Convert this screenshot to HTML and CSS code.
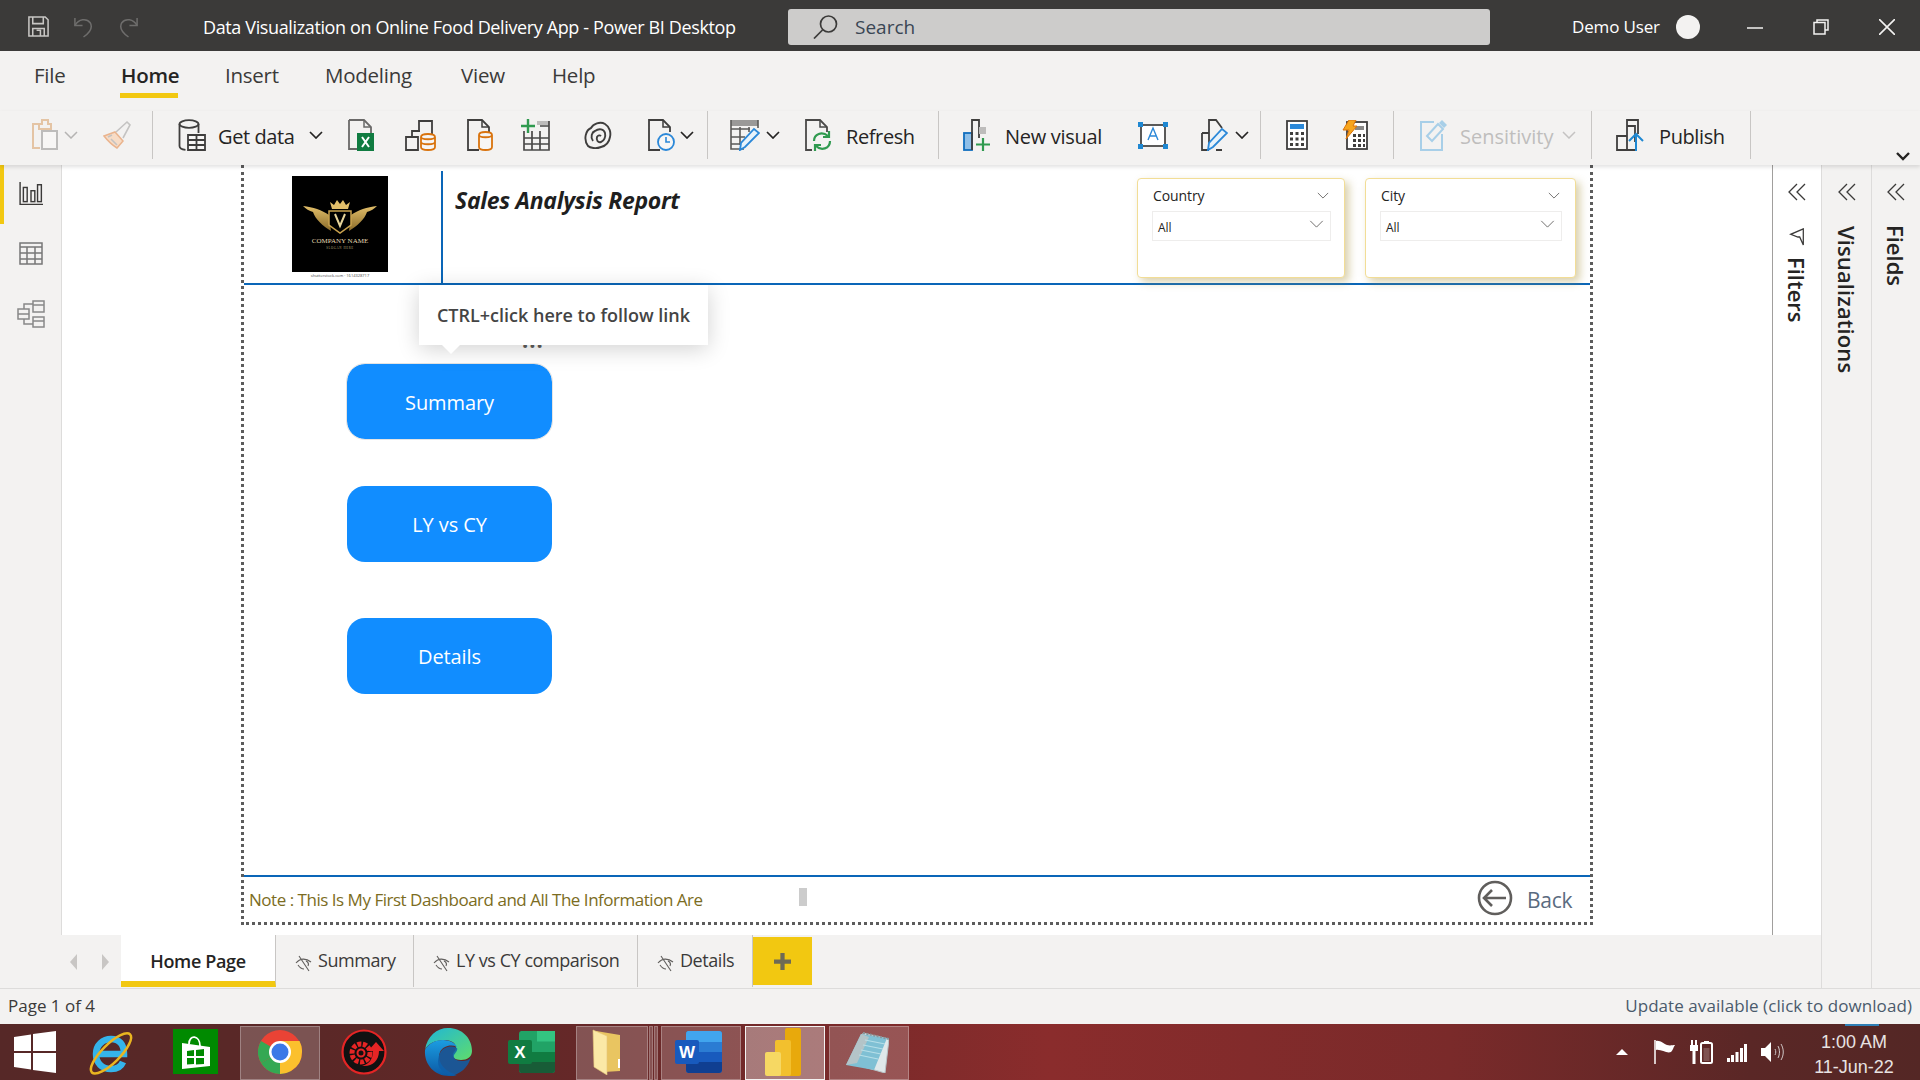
FILE: index.html
```html
<!DOCTYPE html>
<html lang="en">
<head>
    <meta charset="UTF-8">
    <title>Data Visualization on Online Food Delivery App - Power BI Desktop</title>
    <link rel="stylesheet" href="styles.css">
</head>
<body>
    <!-- title bar -->
    <header class="titlebar">
        <svg class="qa qa-save" viewBox="0 0 24 24" fill="none" stroke="#c8c6c4" stroke-width="1.6"><path d="M2 2h17l3 3v17H2z"/><path d="M6 2v7h11V2M6 22v-8h12v8"/><path d="M10 16h4v6"/></svg>
        <svg class="qa qa-undo" viewBox="0 0 22 24" fill="none" stroke="#6e6d6c" stroke-width="1.6"><path d="M2 3v8h8"/><path d="M2 11C6 4 14 3 18 8c3 5 0 10-7 15"/></svg>
        <svg class="qa qa-redo" viewBox="0 0 22 24" fill="none" stroke="#6e6d6c" stroke-width="1.6"><path d="M20 3v8h-8"/><path d="M20 11C16 4 8 3 4 8c-3 5 0 10 7 15"/></svg>
        <div class="doc-title">Data Visualization on Online Food Delivery App - Power BI Desktop</div>
        <div class="searchbox">
            <svg class="search-icon" viewBox="0 0 25 24" fill="none" stroke="#3b3a39" stroke-width="1.7"><circle cx="15.5" cy="9" r="8"/><path d="M9.5 15L1 23.5"/></svg>
            <span>Search</span>
        </div>
        <div class="user">Demo User</div>
        <div class="avatar"></div>
        <svg class="win-btn win-min" viewBox="0 0 16 16" stroke="#f3f2f1" stroke-width="1.5"><path d="M0 8h16"/></svg>
        <svg class="win-btn win-max" viewBox="0 0 16 16" fill="none" stroke="#f3f2f1" stroke-width="1.5"><path d="M4 3V1h11v10h-3"/><rect x="1" y="3.5" width="11" height="11.5"/></svg>
        <svg class="win-btn win-close" viewBox="0 0 16 16" stroke="#f3f2f1" stroke-width="1.6"><path d="M0 0l16 16M16 0L0 16"/></svg>
    </header>

    <!-- ribbon -->
    <nav class="ribbon-tabs">
        <div class="rtab rtab-file">File</div>
        <div class="rtab rtab-home">Home</div>
        <div class="rtab rtab-insert">Insert</div>
        <div class="rtab rtab-model">Modeling</div>
        <div class="rtab rtab-view">View</div>
        <div class="rtab rtab-help">Help</div>
    </nav>
    <div class="toolbar">
        <svg class="tool t-paste" viewBox="0 0 28 32" fill="none"><path d="M8 5H2v24h7" stroke="#e4c4a4" stroke-width="2"/><path d="M8 5h3V1h6v4h3v5H8z" stroke="#e4c4a4" stroke-width="2"/><path d="M11 12h15v18H11z" stroke="#bdbcbb" stroke-width="2" fill="#f7f6f5"/></svg>
        <svg class="chev t-ch1" viewBox="0 0 14 8" fill="none" stroke="#b5b4b3" stroke-width="1.5"><path d="M1 1l6 6 6-6"/></svg>
        <svg class="tool t-brush" viewBox="0 0 28 32" fill="none"><path d="M1 17l11-4 8 9-6 7C9 26 5 22 1 17z" fill="#f7dcc6" stroke="#eab48e" stroke-width="1.5"/><path d="M13 13L24 3l3 3-7 13M8 20l6 6M5 18l4-2" stroke="#c4c3c2" stroke-width="1.6"/></svg>
        <div class="sep s-1"></div>
        <svg class="tool t-data" viewBox="0 0 28 32" fill="none" stroke="#3f3e3d" stroke-width="1.8"><ellipse cx="11" cy="5" rx="9.5" ry="3.8"/><path d="M1.500 5v22c0 2 3 3.500 6 3.800M20.500 5v9"/><path d="M10 16h17v15H10zM10 21h17M10 26h17M18.500 16v15" fill="#f7f6f5"/></svg>
        <span class="tool-label l-data">Get data</span>
        <svg class="chev t-ch2" viewBox="0 0 14 8" fill="none" stroke="#252423" stroke-width="1.7"><path d="M1 1l6 6 6-6"/></svg>
        <svg class="tool t-excel" viewBox="0 0 28 32" fill="none"><path d="M2 1h15l7 7v7M2 1v29h9" stroke="#6a6968" stroke-width="1.8"/><path d="M17 1v7h7" stroke="#6a6968" stroke-width="1.5"/><rect x="10" y="14" width="17" height="18" fill="#107c41"/><path d="M15 18l7 10M22 18l-7 10" stroke="#fff" stroke-width="2"/></svg>
        <svg class="tool t-hub" viewBox="0 0 32 32" fill="none"><path d="M14 12V2h13v13" stroke="#3f3e3d" stroke-width="1.8"/><path d="M1 18h12v13H1zM7 18v-6h8" stroke="#3f3e3d" stroke-width="1.8"/><path d="M16 18c0-4 14-4 14 0v10c0 4-14 4-14 0zM16 18c0 3 14 3 14 0M16 23c0 3 14 3 14 0" stroke="#d9730d" stroke-width="1.8" fill="#f7f6f5"/></svg>
        <svg class="tool t-sql" viewBox="0 0 28 32" fill="none"><path d="M13 31H2V1h14l7 7v5" stroke="#3f3e3d" stroke-width="1.8"/><path d="M16 1v7h7" stroke="#3f3e3d" stroke-width="1.5"/><path d="M13 16c0-4 13-4 13 0v12c0 4-13 4-13 0zM13 16c0 3 13 3 13 0" stroke="#d9730d" stroke-width="1.8" fill="#f7f6f5"/></svg>
        <svg class="tool t-enter" viewBox="0 0 30 32" fill="none"><path d="M16 2h12v4H16z" fill="#bdbcbb"/><path d="M3 12v19h25V2M3 19h25M3 25h25M11 12v19M19 12v19M19 7h9" stroke="#4a4948" stroke-width="1.7"/><path d="M7 0v14M0 7h14" stroke="#2f9a4f" stroke-width="2.4"/></svg>
        <svg class="tool t-dv" viewBox="0 0 28 32" fill="none" stroke="#3f3e3d" stroke-width="1.9"><path d="M4 27C-1 20 2 11 7 9c2-4 9-7 14-4 5 3 6 9 5 13-1 6-5 9-9 10-5 2-11 1-13-1z"/><path d="M9 22c-3-4-1-9 2-10 4-3 9-2 10 2 1 4-1 8-4 9-3 1-5-2-4-5 1-2 3-2 4-1"/></svg>
        <svg class="tool t-recent" viewBox="0 0 28 32" fill="none"><path d="M13 31H2V1h14l7 7v5" stroke="#3f3e3d" stroke-width="1.8"/><path d="M16 1v7h7" stroke="#3f3e3d" stroke-width="1.5"/><circle cx="19" cy="23" r="8" stroke="#2b88d8" stroke-width="1.8" fill="#f7f6f5"/><path d="M19 18v5h4" stroke="#2b88d8" stroke-width="1.6"/></svg>
        <svg class="chev t-ch3" viewBox="0 0 14 8" fill="none" stroke="#252423" stroke-width="1.7"><path d="M1 1l6 6 6-6"/></svg>
        <div class="sep s-2"></div>
        <svg class="tool t-trans" viewBox="0 0 30 32" fill="none"><path d="M1 1h27v6H1z" fill="#9a9998"/><path d="M1 1v29h13M1 10h19M1 18h14M1 25h9M10 8v18M19 8v5M28 1v8" stroke="#5a5958" stroke-width="1.6"/><path d="M10 31l1-7 13-14 5 4-14 14z" fill="#e8f3fb" stroke="#2b88d8" stroke-width="1.8"/></svg>
        <svg class="chev t-ch4" viewBox="0 0 14 8" fill="none" stroke="#252423" stroke-width="1.7"><path d="M1 1l6 6 6-6"/></svg>
        <svg class="tool t-refresh" viewBox="0 0 28 32" fill="none"><path d="M8 31H2V1h14l7 7v5" stroke="#4a4948" stroke-width="1.8"/><path d="M16 1v7h7" stroke="#4a4948" stroke-width="1.5"/><path d="M10 22c0-7 8-10 14-5M26 22c0 8-9 10-14 5" stroke="#2f9a4f" stroke-width="2.2"/><path d="M25 12v6h-6M11 32v-6h6" stroke="#2f9a4f" stroke-width="2.2"/></svg>
        <span class="tool-label l-refresh">Refresh</span>
        <div class="sep s-3"></div>
        <svg class="tool t-visual" viewBox="0 0 28 32" fill="none"><rect x="1" y="14" width="8" height="17" fill="#8ebfe8" stroke="#106ebe" stroke-width="1.8"/><path d="M9 31V1h7v18" stroke="#3f3e3d" stroke-width="1.8"/><path d="M16 8h7v7h-7z" fill="#bdbcbb"/><path d="M20 19v13M13 25.500h14" stroke="#2f9a4f" stroke-width="2.2"/></svg>
        <span class="tool-label l-visual">New visual</span>
        <svg class="tool t-text" viewBox="0 0 30 30" fill="none"><rect x="3" y="5" width="24" height="21" stroke="#4a4948" stroke-width="1.8" fill="#fff"/><path d="M10 20l5-12 5 12M11.500 16h7" stroke="#2b88d8" stroke-width="1.4"/><g fill="#1f88d2"><rect x="0" y="2" width="5" height="5"/><rect x="25" y="2" width="5" height="5"/><rect x="0" y="24" width="5" height="5"/><rect x="25" y="24" width="5" height="5"/></g></svg>
        <svg class="tool t-more" viewBox="0 0 28 32" fill="none"><path d="M2 14h7M2 14v17h7M9 31V1h7l6 8M16 31h6" stroke="#3f3e3d" stroke-width="1.8"/><path d="M8 31l1-7 13-14 5 4-14 14z" fill="#e8f3fb" stroke="#2b88d8" stroke-width="1.8"/></svg>
        <svg class="chev t-ch5" viewBox="0 0 14 8" fill="none" stroke="#252423" stroke-width="1.7"><path d="M1 1l6 6 6-6"/></svg>
        <div class="sep s-4"></div>
        <svg class="tool t-calc" viewBox="0 0 22 30" fill="none"><rect x="1" y="1" width="20" height="28" stroke="#3f3e3d" stroke-width="1.8" fill="#fff"/><rect x="4" y="4" width="14" height="5" fill="#2b88d8"/><path d="M4 12h3v3H4zM9.500 12h3v3h-3zM15 12h3v3h-3zM4 17.500h3v3H4zM9.500 17.500h3v3h-3zM15 17.500h3v3h-3zM4 23h3v3H4zM9.500 23h3v3h-3zM15 23h3v3h-3z" fill="#3f3e3d"/></svg>
        <svg class="tool t-quick" viewBox="0 0 26 30" fill="none"><rect x="5" y="2" width="20" height="27" stroke="#3f3e3d" stroke-width="1.8" fill="#fff"/><path d="M13 6h9v4h-9z" fill="#8a8988"/><path d="M11 14h3v3h-3zM16 14h3v3h-3zM21 14h2v3h-2zM11 19h3v3h-3zM16 19h3v3h-3zM21 19h2v3h-2zM11 24h3v3h-3zM16 24h3v3h-3zM21 24h2v3h-2z" fill="#3f3e3d"/><path d="M7 0h7l-3 6h4L4 19l3-9H1z" fill="#f7a51c" stroke="#d9730d"/></svg>
        <div class="sep s-5"></div>
        <svg class="tool t-sens" viewBox="0 0 28 32" fill="none"><path d="M15 3H2v28h21V15" stroke="#a8cfe8" stroke-width="2"/><path d="M8 17L19 5l5 5-11 12z" stroke="#a8cfe8" stroke-width="2"/><path d="M20 4l3-3 5 5-3 3z" fill="#a8cfe8"/></svg>
        <span class="tool-label l-sens">Sensitivity</span>
        <svg class="chev t-ch6" viewBox="0 0 14 8" fill="none" stroke="#c4c3c2" stroke-width="1.5"><path d="M1 1l6 6 6-6"/></svg>
        <div class="sep s-6"></div>
        <svg class="tool t-pub" viewBox="0 0 28 32" fill="none" stroke="#3f3e3d" stroke-width="1.8"><path d="M1 17h10v14H1zM11 17V7h8v16M11 7V1h11v14M11 31h8"/><path d="M20 32V15M13 22l7-7 7 7" stroke="#1f88d2" stroke-width="2"/></svg>
        <span class="tool-label l-pub">Publish</span>
        <div class="sep s-7"></div>
        <svg class="t-collapse" viewBox="0 0 14 9" fill="none" stroke="#252423" stroke-width="2.4"><path d="M1 1l6 6 6-6"/></svg>
    </div>

    <div class="workspace">
        <div class="work-left">
            <div class="work-top">
                <aside class="rail">
                    <div class="rail-item rail-active">
                        <svg viewBox="0 0 22 22" fill="none" stroke="#3b3a39" stroke-width="1.3"><path d="M1 0v20.500h21"/><rect x="4" y="5" width="3.500" height="13"/><rect x="11" y="8" width="3.500" height="10"/><rect x="17" y="2.500" width="3.500" height="15.500"/></svg>
                    </div>
                    <div class="rail-item">
                        <svg viewBox="0 0 24 24" fill="none" stroke="#777" stroke-width="1.5"><rect x="1" y="1" width="22" height="21"/><path d="M1 5h22M1 11h22M1 17h22M8 5v17M16 5v17"/></svg>
                    </div>
                    <div class="rail-item">
                        <svg viewBox="0 0 28 28" fill="none" stroke="#888" stroke-width="1.5"><rect x="1" y="9" width="11" height="10"/><path d="M1 14h11M7 9V4h9M7 19v5h9"/><rect x="16" y="1" width="11" height="11"/><path d="M16 5h11"/><rect x="16" y="17" width="11" height="10"/><path d="M16 21h11"/></svg>
                    </div>
                </aside>

                <main class="canvas">
                    <section class="page">
                        <div class="page-head">
                            <div class="logo-slot">
                                <svg class="logo" viewBox="0 0 96 96">
                                    <defs><linearGradient id="gold" x1="0" y1="0" x2="0" y2="1"><stop offset="0" stop-color="#e2bf6a"/><stop offset="1" stop-color="#8a6a28"/></linearGradient></defs>
                                    <rect width="96" height="96" fill="#000"/>
                                    <path d="M11 30c10 1 19 4 26 9l2 16c-8-5-16-12-18-19-4-1-7-3-10-6zM85 30c-10 1-19 4-26 9l-2 16c8-5 16-12 18-19 4-1 7-3 10-6z" fill="url(#gold)"/>
                                    <path d="M40 33l-2-7 4 3 3-5 3 4 3-4 3 5 4-3-2 7z" fill="#e2bf6a"/>
                                    <path d="M37 35h22v14l-11 8-11-8z" fill="#000" stroke="#c9a24e" stroke-width="1.5"/>
                                    <path d="M43 38l5 12 5-12" fill="none" stroke="#e7d49a" stroke-width="2"/>
                                    <text x="48" y="67" class="logo-name">COMPANY NAME</text>
                                    <text x="48" y="73" class="logo-slogan">SLOGAN HERE</text>
                                </svg>
                                <div class="logo-credit">shutterstock.com · 1614328717</div>
                            </div>
                            <div class="head-rule"></div>
                            <h1 class="report-title">Sales Analysis Report</h1>
                            <div class="slicers">
                                <div class="slicer slicer-country">
                                    <div class="slicer-head"><span>Country</span><svg viewBox="0 0 14 8" fill="none" stroke="#605e5c"><path d="M1 1l6 6 6-6"/></svg></div>
                                    <div class="slicer-box"><span>All</span><svg viewBox="0 0 16 9" fill="none" stroke="#605e5c"><path d="M1 1l7 7 7-7"/></svg></div>
                                </div>
                                <div class="slicer slicer-city">
                                    <div class="slicer-head"><span>City</span><svg viewBox="0 0 14 8" fill="none" stroke="#605e5c"><path d="M1 1l6 6 6-6"/></svg></div>
                                    <div class="slicer-box"><span>All</span><svg viewBox="0 0 16 9" fill="none" stroke="#605e5c"><path d="M1 1l7 7 7-7"/></svg></div>
                                </div>
                            </div>
                        </div>
                        <div class="page-body">
                            <div class="tooltip">CTRL+click here to follow link</div>
                            <div class="more-dots">...</div>
                            <div class="nav-btn nav-summary">Summary</div>
                            <div class="nav-btn nav-ly">LY vs CY</div>
                            <div class="nav-btn nav-details">Details</div>
                        </div>
                        <div class="page-foot">
                            <span class="note">Note : This Is My First Dashboard and All The Information Are</span>
                            <span class="scroll-bit"></span>
                            <svg class="back-icon" viewBox="0 0 36 36" fill="none" stroke="#605e5c" stroke-width="2.6"><circle cx="18" cy="18" r="16"/><path d="M29 18H8M15 10l-8 8 8 8"/></svg>
                            <span class="back-text">Back</span>
                        </div>
                    </section>
                </main>

                <aside class="pane-filters">
                    <svg class="dbl" viewBox="0 0 18 18" fill="none" stroke="#3b3a39" stroke-width="1.3"><path d="M9 1L1 9l8 8M17 1L9 9l8 8"/></svg>
                    <svg class="funnel" viewBox="0 0 16 20" fill="none" stroke="#3b3a39" stroke-width="1.4"><path d="M15 1L1 7l8 3 2 0 4 9z"/></svg>
                    <div class="vtext vt-filters">Filters</div>
                </aside>
            </div>

            <div class="page-tabs">
                <svg class="tab-arrow ta-prev" viewBox="0 0 8 16" fill="#c8c6c4"><path d="M7 0v16L0 8z"/></svg>
                <svg class="tab-arrow ta-next" viewBox="0 0 8 16" fill="#c8c6c4"><path d="M1 0v16l7-8z"/></svg>
                <div class="ptab ptab-home">Home Page</div>
                <div class="ptab ptab-sum"><svg class="eye" viewBox="0 0 18 18" fill="none" stroke="#605e5c" stroke-width="1.1"><path d="M1 9c4-5 10-5 15-1M3 11c2 3 4 4 6 4M11 7c2 1 3 3 2 5M4 2l10 15"/></svg>Summary</div>
                <div class="ptab ptab-ly"><svg class="eye" viewBox="0 0 18 18" fill="none" stroke="#605e5c" stroke-width="1.1"><path d="M1 9c4-5 10-5 15-1M3 11c2 3 4 4 6 4M11 7c2 1 3 3 2 5M4 2l10 15"/></svg>LY vs CY comparison</div>
                <div class="ptab ptab-det"><svg class="eye" viewBox="0 0 18 18" fill="none" stroke="#605e5c" stroke-width="1.1"><path d="M1 9c4-5 10-5 15-1M3 11c2 3 4 4 6 4M11 7c2 1 3 3 2 5M4 2l10 15"/></svg>Details</div>
                <div class="ptab-add"><svg viewBox="0 0 16 16" fill="#6f6a55"><path d="M6 0h4v6h6v4h-6v6H6v-6H0V6h6z"/></svg></div>
            </div>
        </div>
        <aside class="pane pane-viz">
            <svg class="dbl" viewBox="0 0 18 18" fill="none" stroke="#3b3a39" stroke-width="1.3"><path d="M9 1L1 9l8 8M17 1L9 9l8 8"/></svg>
            <div class="vtext vt-viz">Visualizations</div>
        </aside>
        <aside class="pane pane-fields">
            <svg class="dbl" viewBox="0 0 18 18" fill="none" stroke="#3b3a39" stroke-width="1.3"><path d="M9 1L1 9l8 8M17 1L9 9l8 8"/></svg>
            <div class="vtext vt-fields">Fields</div>
        </aside>
    </div>

    <footer class="statusbar">
        <span>Page 1 of 4</span>
        <span class="update">Update available (click to download)</span>
    </footer>

    <!-- windows taskbar -->
    <div class="taskbar">
        <svg class="tb-start" viewBox="0 0 42 42" fill="#fff"><path d="M0 6l17-2.500V20H0zM19 3l23-3v20H19zM0 22h17v16.500L0 36zM19 22h23v20l-23-3z"/></svg>
        <svg class="tb-ie" viewBox="0 0 46 46" fill="none"><path d="M9 25h27c0-10-5-15-13-15S8 16 8 25s6 15 15 15c6 0 10-2 12-7" stroke="#35b4ea" stroke-width="6.500"/><ellipse cx="22" cy="24" rx="27" ry="9" transform="rotate(-45 23 23)" stroke="#eab520" stroke-width="2.500"/></svg>
        <svg class="tb-store" viewBox="0 0 45 45"><rect width="45" height="45" fill="#008a00"/><path d="M9 14l28 4v19l-28 3z" fill="#fff"/><path d="M16 15c0-10 11-9 11 2" fill="none" stroke="#fff" stroke-width="1.800"/><path d="M14 22l7-1v6h-7zM23 21l8-1v7h-8zM14 29h7v6l-7 .5zM23 29h8v6l-8 .5z" fill="#008a00"/></svg>
        <div class="tile tile-chrome">
            <svg viewBox="0 0 44 44"><circle cx="22" cy="22" r="22" fill="#ea4335"/><path d="M3 33L22 22l11 19A22 22 0 0 1 3 33z" fill="#34a853"/><path d="M3 11L22 22 3 33A22 22 0 0 1 3 11z" fill="#34a853"/><path d="M22 11h19.500A22 22 0 0 1 44 22a22 22 0 0 1-11 19A22 22 0 0 1 22 44z" fill="#fbc02d"/><circle cx="22" cy="22" r="11" fill="#fff"/><circle cx="22" cy="22" r="8.500" fill="#3b78e7"/></svg>
        </div>
        <svg class="tb-iobit" viewBox="0 0 46 46"><circle cx="23" cy="23" r="21.500" fill="#111" stroke="#e52525" stroke-width="2.200"/><circle cx="20" cy="24" r="9" fill="none" stroke="#e52525" stroke-width="5" stroke-dasharray="4 1.500"/><circle cx="20" cy="24" r="3.500" fill="#111" stroke="#e52525" stroke-width="2"/><path d="M21 37c8-2 11-8 11-15h-5l8-9 8 9h-5c0 10-7 16-17 15z" fill="#e52525"/></svg>
        <svg class="tb-edge" viewBox="0 0 48 48">
            <defs><linearGradient id="edgeA" x1="0" y1="0" x2="1" y2="1"><stop offset="0" stop-color="#1fb6d8"/><stop offset="1" stop-color="#5fdc6c"/></linearGradient><linearGradient id="edgeB" x1="0" y1="0" x2="0" y2="1"><stop offset="0" stop-color="#1b9de2"/><stop offset="1" stop-color="#0c59a4"/></linearGradient></defs>
            <path d="M1 22C3 8 13 0 24 0c14 0 24 10 24 23 0 6-5 9-11 9-6 0-9-3-8-6 1-3 3-3 3-7-1-5-6-7-11-7C11 12 3 16 1 22z" fill="url(#edgeA)"/>
            <path d="M1 22c3-6 10-10 18-10 7 0 12 3 14 7-6-3-14-1-17 5-3 7 1 17 14 22 1 0 2 1 3 1-2 1-5 1-8 1C11 48 0 37 1 22z" fill="url(#edgeB)"/>
            <path d="M16 24c3-6 11-8 17-5 1 2-1 4-3 7-1 3 2 6 8 6 4 0 8-1 9-4-3 11-12 19-22 18-13-5-12-15-9-22z" fill="#0f5ea8" opacity=".85" transform="translate(0 1)"/>
        </svg>
        <svg class="tb-excel" viewBox="0 0 47 42"><path d="M13 0h31a3 3 0 0 1 3 3v36a3 3 0 0 1-3 3H13a3 3 0 0 1-2-3V3a3 3 0 0 1 2-3z" fill="#21a366"/><rect x="29" y="0" width="18" height="10.500" fill="#33c481"/><rect x="11" y="21" width="36" height="10.500" fill="#107c41"/><path d="M11 31h36v8a3 3 0 0 1-3 3H13a3 3 0 0 1-2-3z" fill="#185c37"/><rect x="0" y="9" width="24" height="24" rx="2" fill="#107c41"/><text x="12" y="27" class="app-letter">X</text></svg>
        <div class="tile tile-folder">
            <svg viewBox="0 0 32 46"><path d="M4 2l24 4v36l-16 1z" fill="#e9c561"/><path d="M1 1l14 6v39L2 38z" fill="#fbe9a6" stroke="#e5c878" stroke-width=".6"/><rect x="26" y="30" width="2" height="9" fill="#fff"/></svg>
        </div>
        <div class="tile-stack"></div><div class="tile-stack"></div>
        <div class="tile tile-word">
            <svg viewBox="0 0 47 42"><path d="M13 0h31a3 3 0 0 1 3 3v36a3 3 0 0 1-3 3H13a3 3 0 0 1-2-3V3a3 3 0 0 1 2-3z" fill="#2b7cd3"/><path d="M11 3a3 3 0 0 1 2-3h31a3 3 0 0 1 3 3v8H11z" fill="#41a5ee"/><rect x="11" y="21" width="36" height="10.500" fill="#185abd"/><path d="M11 31h36v8a3 3 0 0 1-3 3H13a3 3 0 0 1-2-3z" fill="#103f91"/><rect x="0" y="9" width="24" height="24" rx="2" fill="#185abd"/><text x="12" y="27" class="app-letter">W</text></svg>
        </div>
        <div class="tile tile-pbi">
            <svg viewBox="0 0 36 48"><rect x="20" y="0" width="16" height="48" rx="2" fill="#e8a90c"/><rect x="10" y="12" width="16" height="36" rx="2" fill="#f2c02e"/><rect x="0" y="24" width="16" height="24" rx="2" fill="#f6d863"/></svg>
        </div>
        <div class="tile tile-note">
            <svg viewBox="0 0 44 42"><path d="M18 2l26 6-4 34-28-8z" fill="#dfe8ea" stroke="#b8c4c8"/><path d="M16 3L1 34l28 5 13-32z" fill="#7fc0d4"/><path d="M16 3L1 34l11-2 12-26z" fill="#b4c4c8"/><path d="M20 9l20 4M18 14l20 4M16 19l20 4M14 24l19 4" stroke="#b7dfe8" stroke-width="1.200"/><path d="M18 2l26 6" stroke="#8a9599" stroke-width="2" stroke-dasharray="2 1.500"/></svg>
        </div>
        <div class="tray">
            <svg class="tray-up" viewBox="0 0 12 6" fill="#fff"><path d="M6 0l6 6H0z"/></svg>
            <svg class="tray-flag" viewBox="0 0 22 24" fill="#fff"><path d="M1 0v24" stroke="#fff" stroke-width="1.500"/><path d="M2 1c4-1 8 3 11 4 3 1 6 0 8 0-2 3-2 5-4 7-4 2-10-3-15-2z"/></svg>
            <svg class="tray-power" viewBox="0 0 24 24" fill="none"><path d="M3 0v5M7 0v5" stroke="#fff" stroke-width="2"/><path d="M1 5h8v6H6.500v13h-3V11H1z" fill="#fff"/><rect x="12" y="3" width="11" height="20" rx="1.500" stroke="#fff" stroke-width="2"/><rect x="15" y="1" width="5" height="2" fill="#fff"/><rect x="14.500" y="8" width="6" height="13" fill="#fff" opacity=".2"/></svg>
            <svg class="tray-signal" viewBox="0 0 20 18" fill="#fff"><rect x="0" y="14" width="3" height="4" /><rect x="4" y="11" width="3" height="7"/><rect x="8.500" y="8" width="3" height="10"/><rect x="13" y="4" width="3" height="14"/><rect x="17" y="0" width="3" height="18"/></svg>
            <svg class="tray-sound" viewBox="0 0 24 22" fill="none"><path d="M0 7h4l6-6v20l-6-6H0z" fill="#fff"/><path d="M14 8c1 2 1 4 0 6M17 5c2 4 2 8 0 12M20 3c3 5 3 11 0 16" stroke="#cfc6c6"/></svg>
            <div class="clock"><div>1:00 AM</div><div>11-Jun-22</div></div>
        </div>
        <div class="notify-tick"></div>
    </div>
</body>
</html>
```
FILE: styles.css
```css
* {
    box-sizing: border-box;
}

html, body {
    margin: 0;
    width: 1920px;
    height: 1080px;
    overflow: hidden;
}

body {
    display: flex;
    flex-direction: column;
    font-family: "Open Sans", "Noto Sans", sans-serif;
    color: #252423;
    background: #f3f2f1;
}

svg {
    display: block;
    flex: none;
}

/* title bar */
.titlebar {
    display: flex;
    align-items: center;
    height: 51px;
    flex: none;
    padding-top: 2px;
    background: #3b3a39;
    color: #fff;
}

.qa {
    height: 23px;
}

.qa-save { width: 23px; margin-left: 27px; }
.qa-undo { width: 21px; margin-left: 23px; }
.qa-redo { width: 21px; margin-left: 24px; }

.doc-title {
    margin-left: 64px;
    width: 585px;
    font-size: 18px;
    letter-spacing: -0.37px;
    white-space: nowrap;
}

.searchbox {
    display: flex;
    align-items: center;
    width: 702px;
    height: 36px;
    padding-left: 25px;
    border-radius: 3px;
    background: #cdcccb;
    color: #3a4654;
    font-size: 19px;
}

.search-icon {
    width: 25px;
    height: 24px;
    margin-right: 17px;
}

.user {
    margin-left: 82px;
    width: 104px;
    font-size: 17px;
    letter-spacing: -0.15px;
    white-space: nowrap;
}

.avatar {
    width: 24px;
    height: 24px;
    border-radius: 50%;
    background: #f3f2f1;
}

.win-btn {
    width: 16px;
    height: 16px;
}

.win-min { margin-left: 47px; margin-top: 2px; }
.win-max { margin-left: 50px; margin-top: 1px; }
.win-close { margin-left: 50px; }

/* ribbon */
.ribbon-tabs {
    display: flex;
    height: 60px;
    flex: none;
    padding-left: 34px;
    padding-top: 9px;
    font-size: 20.5px;
    letter-spacing: -0.25px;
}

.rtab {
    height: 38px;
    line-height: 30px;
    color: #3b3a39;
}

.rtab-file { width: 87px; }
.rtab-home { width: 104px; color: #252423; font-weight: 600; position: relative; }
.rtab-home::after {
    content: "";
    position: absolute;
    left: -1px;
    bottom: 0;
    width: 58px;
    height: 5px;
    background: #f2c811;
}
.rtab-insert { width: 100px; }
.rtab-model { width: 136px; }
.rtab-view { width: 91px; }

.toolbar {
    position: relative;
    z-index: 5;
    display: flex;
    align-items: center;
    height: 54px;
    flex: none;
    padding-bottom: 6px;
    background: #f3f2f1;
    box-shadow: 0 2px 4px rgba(0, 0, 0, 0.12);
}

.tool {
    width: 28px;
    height: 32px;
}

.chev {
    width: 14px;
    height: 8px;
}

.tool-label {
    margin-top: 2px;
    font-size: 20px;
    letter-spacing: -0.4px;
    color: #252423;
    white-space: nowrap;
}

.sep {
    width: 1px;
    height: 48px;
    background: #c8c6c4;
}

.t-paste { margin-left: 31px; }
.t-ch1 { margin-left: 5px; }
.t-brush { margin-left: 25px; }
.s-1 { margin-left: 21px; }
.t-data { margin-left: 25px; }
.l-data { margin-left: 12px; width: 91px; }
.t-ch2 { margin-left: 0; }
.t-excel { margin-left: 24px; }
.t-hub { width: 32px; margin-left: 30px; }
.t-sql { margin-left: 29px; }
.t-enter { width: 30px; margin-left: 27px; }
.t-dv { margin-left: 33px; }
.t-recent { margin-left: 35px; }
.t-ch3 { margin-left: 5px; }
.s-2 { margin-left: 13px; }
.t-trans { width: 30px; margin-left: 22px; }
.t-ch4 { margin-left: 6px; }
.t-refresh { margin-left: 24px; }
.l-refresh { margin-left: 14px; width: 92px; }
.s-3 { margin-left: 0; }
.t-visual { margin-left: 24px; }
.l-visual { margin-left: 14px; width: 133px; letter-spacing: -0.3px; }
.t-text { width: 30px; height: 30px; }
.t-more { margin-left: 32px; }
.t-ch5 { margin-left: 7px; }
.s-4 { margin-left: 11px; }
.t-calc { width: 22px; height: 30px; margin-left: 25px; }
.t-quick { width: 26px; height: 30px; margin-left: 34px; }
.s-5 { margin-left: 25px; }
.t-sens { margin-left: 25px; }
.l-sens { margin-left: 13px; width: 102px; color: #bfbebd; letter-spacing: 0; }
.s-6 { margin-left: 15px; }
.t-ch6 { margin-left: 0; }
.t-pub { margin-left: 24px; }
.l-pub { margin-left: 15px; width: 91px; }
.t-collapse {
    position: absolute;
    right: 10px;
    bottom: 4px;
    width: 14px;
    height: 9px;
}

/* main area */
.workspace {
    display: flex;
    height: 823px;
    flex: none;
}

.work-left {
    display: flex;
    flex-direction: column;
    width: 1821px;
}

.work-top {
    display: flex;
    height: 770px;
    flex: none;
}

.rail {
    width: 62px;
    flex: none;
    margin-top: -1px;
    border-right: 1px solid #dddcdb;
}

.rail-item {
    display: flex;
    align-items: center;
    justify-content: center;
    height: 60px;
}

.rail-item svg {
    width: 24px;
    height: 24px;
}

.rail-item:last-child svg {
    width: 28px;
    height: 28px;
}

.rail-active {
    border-left: 4px solid #f2c811;
    padding-right: 4px;
}

.canvas {
    width: 1710px;
    flex: none;
    padding-left: 179px;
    background: #fff;
}

.page {
    display: flex;
    flex-direction: column;
    width: 1352px;
    height: 760px;
    border: 3px dotted #5c5c5c;
    border-top: 0;
}

.page-head {
    display: flex;
    height: 120px;
    flex: none;
    border-bottom: 2px solid #0a66b8;
}

.logo-slot {
    width: 197px;
    flex: none;
    padding-left: 48px;
    padding-top: 11px;
}

.logo {
    width: 96px;
    height: 96px;
}

.logo-name {
    font-family: "Liberation Serif", serif;
    font-size: 7px;
    fill: #e4d8b0;
    text-anchor: middle;
}

.logo-slogan {
    font-family: "Liberation Serif", serif;
    font-size: 3px;
    letter-spacing: 0.6px;
    fill: #b7a878;
    text-anchor: middle;
}

.logo-credit {
    width: 96px;
    margin-top: 1px;
    font-size: 4px;
    line-height: 6px;
    text-align: center;
    white-space: nowrap;
    color: #444;
}

.head-rule {
    width: 2px;
    height: 112px;
    margin-top: 6px;
    background: #0a66b8;
}

.report-title {
    margin: 18px 0 0 12px;
    font-size: 23px;
    line-height: 34px;
    font-style: italic;
    font-weight: 700;
    color: #1f1f1f;
    letter-spacing: -0.3px;
    white-space: nowrap;
}

.slicers {
    display: flex;
    gap: 20px;
    margin-left: auto;
    padding: 13px 14px 0 0;
}

.slicer {
    position: relative;
    z-index: 1;
    height: 100px;
    padding: 0 13px 0 15px;
    background: #fff;
    border: 1px solid #f2dd96;
    border-radius: 4px;
    box-shadow: 4px 4px 9px rgba(170, 150, 70, 0.45);
    font-size: 14px;
}

.slicer-country { width: 208px; }
.slicer-city { width: 211px; }

.slicer-head {
    display: flex;
    align-items: center;
    justify-content: space-between;
    height: 32px;
    padding-right: 2px;
    letter-spacing: -0.1px;
}

.slicer-head svg {
    width: 12px;
    height: 7px;
}

.slicer-box {
    display: flex;
    align-items: center;
    justify-content: space-between;
    height: 30px;
    margin-left: -1px;
    padding: 2px 6px 0 5px;
    border: 1px solid #eeedec;
    font-size: 12px;
}

.slicer-box svg {
    width: 15px;
    height: 8px;
    margin-top: -6px;
}

.page-body {
    position: relative;
    height: 590px;
    flex: none;
    padding: 79px 0 0 103px;
}

.tooltip {
    position: absolute;
    z-index: 6;
    left: 175px;
    top: 0;
    width: 289px;
    height: 60px;
    background: #fff;
    color: #444;
    font-size: 18px;
    font-weight: 600;
    line-height: 60px;
    text-align: center;
    box-shadow: 0 4px 22px rgba(0, 0, 0, 0.18);
}

.tooltip::after {
    content: "";
    position: absolute;
    left: 23px;
    bottom: -9px;
    border: 9px solid transparent;
    border-bottom: 0;
    border-top-color: #fff;
}

.more-dots {
    position: absolute;
    z-index: 5;
    left: 278px;
    top: 44px;
    font-size: 22px;
    font-weight: 700;
    letter-spacing: 1px;
    color: #605e5c;
    line-height: 20px;
}

.nav-btn {
    display: flex;
    align-items: center;
    justify-content: center;
    width: 205px;
    padding-top: 1px;
    background: #118dff;
    color: #fff;
    border-radius: 18px;
    font-size: 20px;
    letter-spacing: -0.1px;
}

.nav-summary {
    height: 75px;
    outline: 1px solid #e4e4e4;
}
.nav-ly { height: 76px; margin-top: 47px; }
.nav-details { height: 76px; margin-top: 56px; }

.page-foot {
    display: flex;
    align-items: center;
    height: 47px;
    flex: none;
    border-top: 2px solid #0a66b8;
    padding-left: 5px;
}

.note {
    width: 550px;
    font-size: 17px;
    letter-spacing: -0.48px;
    color: #7b6c22;
    white-space: nowrap;
}

.scroll-bit {
    width: 8px;
    height: 18px;
    margin-top: -5px;
    background: #cccccc;
}

.back-icon {
    width: 36px;
    height: 36px;
    margin-left: 670px;
    margin-top: -4px;
}

.back-text {
    margin-left: 14px;
    margin-top: 1px;
    font-size: 21px;
    letter-spacing: -0.3px;
    color: #5a6b80;
}

/* side panes */
.pane-filters {
    display: flex;
    flex-direction: column;
    align-items: center;
    width: 49px;
    flex: none;
    background: #fff;
    border-left: 1px solid #a19f9d;
}

.pane {
    display: flex;
    flex-direction: column;
    align-items: center;
    flex: none;
    width: 50px;
    border-left: 1px solid #dddcdb;
}

.pane-fields {
    width: 49px;
}

.dbl {
    width: 18px;
    height: 18px;
    margin-top: 18px;
}

.funnel {
    width: 16px;
    height: 18px;
    margin-top: 27px;
}

.vtext {
    writing-mode: vertical-rl;
    font-size: 22px;
    font-weight: 600;
    color: #252423;
    white-space: nowrap;
}

.vt-filters { margin-top: 11px; }
.vt-viz { margin-top: 25px; letter-spacing: 0.1px; }
.vt-fields { margin-top: 24px; }

/* page tabs */
.page-tabs {
    display: flex;
    flex: 1;
    padding-left: 62px;
}

.tab-arrow {
    width: 8px;
    height: 16px;
    margin-top: 19px;
}

.ta-prev { margin-left: 8px; }
.ta-next { margin-left: 23px; margin-right: 12px; }

.ptab {
    display: flex;
    align-items: center;
    height: 52px;
    padding-bottom: 2px;
    border-right: 1px solid #c8c6c4;
    font-size: 18px;
    letter-spacing: -0.45px;
    color: #3b3a39;
    white-space: nowrap;
}

.ptab-home {
    width: 155px;
    justify-content: center;
    padding: 6px 0 0;
    background: #fff;
    font-weight: 600;
    color: #252423;
    letter-spacing: -0.35px;
    border-bottom: 6px solid #f2c811;
}

.ptab-sum { width: 138px; padding-left: 19px; }
.ptab-ly { width: 224px; padding-left: 19px; }
.ptab-det { width: 115px; padding-left: 19px; }

.eye {
    width: 18px;
    height: 18px;
    margin: 6px 5px 0 0;
}

.ptab-add {
    display: flex;
    align-items: center;
    justify-content: center;
    width: 59px;
    height: 48px;
    margin-top: 2px;
    background: #f2c811;
}

.ptab-add svg {
    width: 17px;
    height: 17px;
}

/* status bar */
.statusbar {
    display: flex;
    align-items: center;
    justify-content: space-between;
    height: 36px;
    flex: none;
    padding: 0 8px 2px;
    border-top: 1px solid #dddcdb;
    font-size: 17px;
    color: #3b3a39;
}

.update {
    color: #4a5a6c;
    letter-spacing: 0.07px;
}

/* taskbar */
.taskbar {
    position: relative;
    display: flex;
    align-items: center;
    height: 57px;
    flex: none;
    padding-bottom: 2px;
    background: linear-gradient(90deg, #562827 0, #5a2827 300px, #662828 600px, #8a2c2c 1050px, #7a2a2a 1450px, #5a2726 1750px, #542725 1920px);
}

.tb-start { width: 42px; height: 42px; margin-left: 14px; }
.tb-ie { width: 46px; height: 46px; margin-left: 32px; overflow: visible; }
.tb-store { width: 45px; height: 45px; margin-left: 39px; }
.tb-iobit { width: 46px; height: 46px; margin-left: 21px; }
.tb-edge { width: 48px; height: 48px; margin-left: 37px; }
.tb-excel { width: 47px; height: 42px; margin-left: 36px; }

.tile {
    display: flex;
    align-items: center;
    justify-content: center;
    width: 80px;
    height: 54px;
    margin-top: 3px;
    background: rgba(255, 255, 255, 0.2);
    border: 1px solid rgba(255, 255, 255, 0.28);
}

.tile svg {
    margin-top: -3px;
}

.tile-chrome { margin-left: 22px; }
.tile-chrome svg { width: 44px; height: 44px; }

.tile-folder { width: 72px; margin-left: 21px; }
.tile-folder svg { width: 34px; height: 46px; margin-right: 8px; }

.tile-stack {
    width: 4px;
    height: 54px;
    margin: 3px 0 0 1px;
    background: rgba(255, 255, 255, 0.2);
    border: 1px solid rgba(255, 255, 255, 0.22);
}

.tile-word { margin-left: 3px; }
.tile-word svg { width: 47px; height: 42px; margin-left: -6px; }

.tile-pbi {
    margin-left: 4px;
    background: rgba(255, 255, 255, 0.38);
    border-color: #f3f2f1;
}
.tile-pbi svg { width: 36px; height: 48px; margin-right: 4px; }

.tile-note { margin-left: 4px; }
.tile-note svg { width: 44px; height: 42px; margin-right: 4px; }

.app-letter {
    font-family: "Liberation Sans", sans-serif;
    font-size: 17px;
    font-weight: 700;
    fill: #fff;
    text-anchor: middle;
}

.tray {
    display: flex;
    align-items: center;
    margin-left: auto;
}

.tray-up { width: 12px; height: 6px; }
.tray-flag { width: 22px; height: 24px; margin-left: 26px; }
.tray-power { width: 24px; height: 24px; margin-left: 13px; }
.tray-signal { width: 20px; height: 18px; margin-left: 14px; margin-top: 2px; }
.tray-sound { width: 24px; height: 22px; margin-left: 14px; }

.clock {
    width: 108px;
    margin: 6px 12px 0 15px;
    font-family: "Liberation Sans", sans-serif;
    font-size: 18px;
    line-height: 25px;
    text-align: center;
    color: #e8e2e2;
}

.notify-tick {
    position: absolute;
    left: 1845px;
    top: 0;
    width: 34px;
    height: 2px;
    background: #2f7fb5;
}
```
